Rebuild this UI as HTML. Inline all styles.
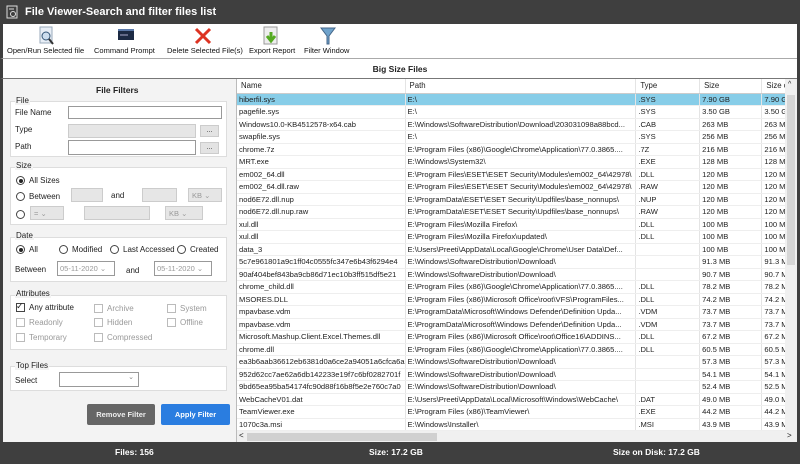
<!DOCTYPE html>
<html><head><style>
*{box-sizing:border-box;margin:0;padding:0}
body{width:800px;height:464px;overflow:hidden;font-family:"Liberation Sans",sans-serif;font-size:8px;color:#222;background:#fff;position:relative}
.a{position:absolute}
#title{left:0;top:0;width:800px;height:24px;background:#3f3f3f;color:#fff;font-weight:bold;font-size:11px;line-height:24px;padding-left:25px}
#tb{left:0;top:24px;width:800px;height:35px;background:#fff;border-bottom:1px solid #aaa;border-left:3px solid #3f3f3f;border-right:3px solid #3f3f3f}
.tbi{position:absolute;top:24px;font-size:7.5px;color:#111;white-space:nowrap}
#hdr{left:0;top:59px;width:800px;height:20px;border-bottom:1px solid #777;border-left:3px solid #3f3f3f;border-right:3px solid #3f3f3f;text-align:center;font-weight:bold;font-size:8.5px;line-height:20px}
#left{left:0;top:79px;width:237px;height:363px;background:#f3f3f3;border-left:3px solid #3f3f3f;border-right:1px solid #bbb}
.gb{position:absolute;border:1px solid #ddd;background:#fff}
.gl{position:absolute;font-size:8px;background:#f3f3f3;padding:0 1px}
.lbl{position:absolute;font-size:8px}
.inp{position:absolute;border:1px solid #999;background:#fff;height:13px}
.dis{position:absolute;background:#e6e6e6;border:1px solid #ccc;height:14px;font-size:7.5px;color:#999;line-height:13px;padding-left:3px}
.btn{position:absolute;background:#e3e3e3;border:1px solid #ccc;width:19px;height:12px;font-size:7px;text-align:center;line-height:9px}
.rad{position:absolute;width:9px;height:9px;border:1px solid #444;border-radius:50%;background:#fff}
.rad.on::after{content:"";position:absolute;left:1.5px;top:1.5px;width:4px;height:4px;border-radius:50%;background:#222}
.chk{position:absolute;width:9px;height:9px;border:1px solid #bbb;background:#fff}
.g{color:#999}
#tbl{left:237px;top:79px;width:560px;height:352px;overflow:hidden;background:#fff}
table{border-collapse:collapse;table-layout:fixed;font-size:7.6px}
td{height:12.5px;line-height:11px;border-right:1px solid #e4e4e4;border-bottom:1px solid #eee;padding:0 0 0 2px;white-space:nowrap;overflow:hidden}
tr.h td{height:14px;border-bottom:1px solid #ccc;font-size:7.8px;padding-left:4px}
tr.s td{background:#87cde8}
#vs{left:785px;top:79px;width:12px;height:352px;background:#f0f0f0}
#hs{left:237px;top:431px;width:560px;height:11px;background:#f0f0f0}
#st{left:0;top:442px;width:800px;height:22px;background:#3f3f3f;color:#fff;font-weight:bold;font-size:8.5px;line-height:20px}
</style></head><body>
<div class="a" id="title">File Viewer-Search and filter files list</div>
<svg class="a" style="left:6px;top:5px" width="13" height="14"><rect x="1" y="1" width="10" height="12" fill="none" stroke="#ddd"/><circle cx="7" cy="9" r="2.5" fill="none" stroke="#ddd"/><line x1="3" y1="4" x2="8" y2="4" stroke="#ddd"/></svg>
<div class="a" id="tb"></div>
<svg class="a" style="left:36px;top:26px" width="22" height="20"><rect x="4" y="1" width="12" height="16" fill="#e8eef6" stroke="#9ab"/><circle cx="10" cy="10" r="4" fill="#cde" stroke="#357"/><line x1="13" y1="13" x2="17" y2="18" stroke="#333" stroke-width="2"/></svg>
<svg class="a" style="left:118px;top:29px" width="16" height="12"><rect x="0" y="0" width="16" height="11" fill="#1c2a44"/><rect x="0" y="0" width="16" height="2" fill="#5a78a8"/><line x1="2" y1="6" x2="10" y2="6" stroke="#aac" /></svg>
<svg class="a" style="left:193px;top:26px" width="20" height="20"><path d="M3 3 L17 17 M17 3 L3 17" stroke="#d32" stroke-width="3"/></svg>
<svg class="a" style="left:262px;top:26px" width="20" height="20"><rect x="2" y="1" width="13" height="17" fill="#eee" stroke="#999"/><path d="M9 6 V13 M5 10 L9 15 L13 10" stroke="#5a2" stroke-width="3" fill="none"/></svg>
<svg class="a" style="left:320px;top:26px" width="16" height="20"><path d="M1 2 H15 L9 10 V18 H7 V10 Z" fill="#6fa3cc" stroke="#468"/></svg>
<div class="tbi" style="left:7px;top:46px">Open/Run Selected file</div>
<div class="tbi" style="left:94px;top:46px">Command Prompt</div>
<div class="tbi" style="left:167px;top:46px">Delete Selected File(s)</div>
<div class="tbi" style="left:249px;top:46px">Export Report</div>
<div class="tbi" style="left:304px;top:46px">Filter Window</div>
<div class="a" id="hdr">Big Size Files</div>
<div class="a" id="left">
<div class="lbl" style="left:93px;top:6px;font-weight:bold;font-size:8.5px">File Filters</div>
<div class="gb" style="left:7px;top:22px;width:217px;height:56px"></div><div class="gl" style="left:12px;top:17px">File</div>
<div class="lbl" style="left:12px;top:29px">File Name</div><div class="inp" style="left:65px;top:27px;width:154px"></div>
<div class="lbl" style="left:12px;top:46px">Type</div><div class="dis" style="left:65px;top:45px;width:128px"></div><div class="btn" style="left:197px;top:46px">...</div>
<div class="lbl" style="left:12px;top:63px">Path</div><div class="inp" style="left:65px;top:61px;width:128px;height:15px"></div><div class="btn" style="left:197px;top:63px">...</div>
<div class="gb" style="left:7px;top:88px;width:217px;height:58px"></div><div class="gl" style="left:12px;top:82px">Size</div>
<div class="rad on" style="left:13px;top:97px"></div><div class="lbl" style="left:26px;top:97px">All Sizes</div>
<div class="rad" style="left:13px;top:113px"></div><div class="lbl" style="left:26px;top:113px">Between</div>
<div class="dis" style="left:68px;top:109px;width:32px"></div><div class="lbl" style="left:108px;top:112px">and</div><div class="dis" style="left:139px;top:109px;width:35px"></div><div class="dis" style="left:185px;top:109px;width:34px">KB &#8964;</div>
<div class="rad" style="left:13px;top:131px"></div><div class="dis" style="left:27px;top:127px;width:34px">= &#8964;</div><div class="dis" style="left:81px;top:127px;width:66px"></div><div class="dis" style="left:162px;top:127px;width:38px">KB &#8964;</div>
<div class="gb" style="left:7px;top:158px;width:217px;height:45px"></div><div class="gl" style="left:12px;top:152px">Date</div>
<div class="rad on" style="left:13px;top:166px"></div><div class="lbl" style="left:26px;top:166px">All</div>
<div class="rad" style="left:56px;top:166px"></div><div class="lbl" style="left:69px;top:166px">Modified</div>
<div class="rad" style="left:107px;top:166px"></div><div class="lbl" style="left:120px;top:166px">Last Accessed</div>
<div class="rad" style="left:174px;top:166px"></div><div class="lbl" style="left:187px;top:166px">Created</div>
<div class="lbl" style="left:12px;top:186px">Between</div><div class="inp g" style="left:54px;top:182px;width:58px;height:15px;font-size:7.5px;padding:2px">05-11-2020 &#8964;</div>
<div class="lbl" style="left:123px;top:187px">and</div><div class="inp g" style="left:151px;top:182px;width:58px;height:15px;font-size:7.5px;padding:2px">05-11-2020 &#8964;</div>
<div class="gb" style="left:7px;top:216px;width:217px;height:55px"></div><div class="gl" style="left:12px;top:210px">Attributes</div>
<div class="chk" style="left:13px;top:224px;border-color:#444"></div><div class="lbl" style="left:13px;top:222px;font-size:9px">&#10003;</div><div class="lbl" style="left:26px;top:224px">Any attribute</div>
<div class="chk" style="left:91px;top:225px"></div><div class="lbl g" style="left:104px;top:225px">Archive</div>
<div class="chk" style="left:164px;top:225px"></div><div class="lbl g" style="left:177px;top:225px">System</div>
<div class="chk" style="left:13px;top:239px"></div><div class="lbl g" style="left:26px;top:239px">Readonly</div>
<div class="chk" style="left:91px;top:239px"></div><div class="lbl g" style="left:104px;top:239px">Hidden</div>
<div class="chk" style="left:164px;top:239px"></div><div class="lbl g" style="left:177px;top:239px">Offline</div>
<div class="chk" style="left:13px;top:254px"></div><div class="lbl g" style="left:26px;top:254px">Temporary</div>
<div class="chk" style="left:91px;top:254px"></div><div class="lbl g" style="left:104px;top:254px">Compressed</div>
<div class="gb" style="left:7px;top:287px;width:217px;height:25px"></div><div class="gl" style="left:12px;top:282px">Top Files</div>
<div class="lbl" style="left:12px;top:297px">Select</div><div class="inp" style="left:56px;top:293px;width:80px;height:15px;font-size:7px;text-align:right;padding-right:4px;color:#888">&#8964;</div>
<div class="a" style="left:84px;top:325px;width:68px;height:21px;background:#666;color:#eee;font-weight:bold;font-size:7.5px;text-align:center;line-height:21px;border-radius:2px">Remove Filter</div>
<div class="a" style="left:158px;top:325px;width:69px;height:21px;background:#2a7de0;color:#fff;font-weight:bold;font-size:7.5px;text-align:center;line-height:21px;border-radius:2px">Apply Filter</div>
</div>
<div class="a" id="tbl"><table>
<colgroup><col style="width:164px"><col style="width:231px"><col style="width:66px"><col style="width:64px"><col style="width:35px"></colgroup>
<tr class="h"><td>Name</td><td>Path</td><td>Type</td><td>Size</td><td>Size o</td></tr>
<tr class="s"><td>hiberfil.sys</td><td>E:\</td><td>.SYS</td><td>7.90 GB</td><td>7.90 G</td></tr>
<tr><td>pagefile.sys</td><td>E:\</td><td>.SYS</td><td>3.50 GB</td><td>3.50 G</td></tr>
<tr><td>Windows10.0-KB4512578-x64.cab</td><td>E:\Windows\SoftwareDistribution\Download\203031098a88bcd...</td><td>.CAB</td><td>263 MB</td><td>263 M</td></tr>
<tr><td>swapfile.sys</td><td>E:\</td><td>.SYS</td><td>256 MB</td><td>256 M</td></tr>
<tr><td>chrome.7z</td><td>E:\Program Files (x86)\Google\Chrome\Application\77.0.3865....</td><td>.7Z</td><td>216 MB</td><td>216 M</td></tr>
<tr><td>MRT.exe</td><td>E:\Windows\System32\</td><td>.EXE</td><td>128 MB</td><td>128 M</td></tr>
<tr><td>em002_64.dll</td><td>E:\Program Files\ESET\ESET Security\Modules\em002_64\42978\</td><td>.DLL</td><td>120 MB</td><td>120 M</td></tr>
<tr><td>em002_64.dll.raw</td><td>E:\Program Files\ESET\ESET Security\Modules\em002_64\42978\</td><td>.RAW</td><td>120 MB</td><td>120 M</td></tr>
<tr><td>nod6E72.dll.nup</td><td>E:\ProgramData\ESET\ESET Security\Updfiles\base_nonnups\</td><td>.NUP</td><td>120 MB</td><td>120 M</td></tr>
<tr><td>nod6E72.dll.nup.raw</td><td>E:\ProgramData\ESET\ESET Security\Updfiles\base_nonnups\</td><td>.RAW</td><td>120 MB</td><td>120 M</td></tr>
<tr><td>xul.dll</td><td>E:\Program Files\Mozilla Firefox\</td><td>.DLL</td><td>100 MB</td><td>100 M</td></tr>
<tr><td>xul.dll</td><td>E:\Program Files\Mozilla Firefox\updated\</td><td>.DLL</td><td>100 MB</td><td>100 M</td></tr>
<tr><td>data_3</td><td>E:\Users\Preeti\AppData\Local\Google\Chrome\User Data\Def...</td><td></td><td>100 MB</td><td>100 M</td></tr>
<tr><td>5c7e961801a9c1ff04c0555fc347e6b43f6294e4</td><td>E:\Windows\SoftwareDistribution\Download\</td><td></td><td>91.3 MB</td><td>91.3 M</td></tr>
<tr><td>90af404bef843ba9cb86d71ec10b3ff515df5e21</td><td>E:\Windows\SoftwareDistribution\Download\</td><td></td><td>90.7 MB</td><td>90.7 M</td></tr>
<tr><td>chrome_child.dll</td><td>E:\Program Files (x86)\Google\Chrome\Application\77.0.3865....</td><td>.DLL</td><td>78.2 MB</td><td>78.2 M</td></tr>
<tr><td>MSORES.DLL</td><td>E:\Program Files (x86)\Microsoft Office\root\VFS\ProgramFiles...</td><td>.DLL</td><td>74.2 MB</td><td>74.2 M</td></tr>
<tr><td>mpavbase.vdm</td><td>E:\ProgramData\Microsoft\Windows Defender\Definition Upda...</td><td>.VDM</td><td>73.7 MB</td><td>73.7 M</td></tr>
<tr><td>mpavbase.vdm</td><td>E:\ProgramData\Microsoft\Windows Defender\Definition Upda...</td><td>.VDM</td><td>73.7 MB</td><td>73.7 M</td></tr>
<tr><td>Microsoft.Mashup.Client.Excel.Themes.dll</td><td>E:\Program Files (x86)\Microsoft Office\root\Office16\ADDINS...</td><td>.DLL</td><td>67.2 MB</td><td>67.2 M</td></tr>
<tr><td>chrome.dll</td><td>E:\Program Files (x86)\Google\Chrome\Application\77.0.3865....</td><td>.DLL</td><td>60.5 MB</td><td>60.5 M</td></tr>
<tr><td>ea3b6aab36612eb6381d0a6ce2a94051a6cfca6a</td><td>E:\Windows\SoftwareDistribution\Download\</td><td></td><td>57.3 MB</td><td>57.3 M</td></tr>
<tr><td>952d62cc7ae62a6db142233e19f7c6bf0282701f</td><td>E:\Windows\SoftwareDistribution\Download\</td><td></td><td>54.1 MB</td><td>54.1 M</td></tr>
<tr><td>9bd65ea95ba54174fc90d88f16b8f5e2e760c7a0</td><td>E:\Windows\SoftwareDistribution\Download\</td><td></td><td>52.4 MB</td><td>52.5 M</td></tr>
<tr><td>WebCacheV01.dat</td><td>E:\Users\Preeti\AppData\Local\Microsoft\Windows\WebCache\</td><td>.DAT</td><td>49.0 MB</td><td>49.0 M</td></tr>
<tr><td>TeamViewer.exe</td><td>E:\Program Files (x86)\TeamViewer\</td><td>.EXE</td><td>44.2 MB</td><td>44.2 M</td></tr>
<tr><td>1070c3a.msi</td><td>E:\Windows\Installer\</td><td>.MSI</td><td>43.9 MB</td><td>43.9 M</td></tr>
</table></div>
<div class="a" id="vs"><div class="a" style="left:2px;top:16px;width:8px;height:170px;background:#d6d6d6"></div><div class="a" style="left:3px;top:2px;font-size:7px">^</div></div>
<div class="a" id="hs"><div class="a" style="left:10px;top:2px;width:190px;height:8px;background:#d0d0d0"></div><div class="a" style="left:2px;top:0;font-size:8px">&lt;</div><div class="a" style="left:550px;top:0;font-size:8px">&gt;</div></div>
<div class="a" style="left:797px;top:24px;width:3px;height:418px;background:#3f3f3f"></div>
<div class="a" id="st"><span class="a" style="left:115px">Files: 156</span><span class="a" style="left:369px">Size: 17.2 GB</span><span class="a" style="left:613px">Size on Disk: 17.2 GB</span></div>
</body></html>
